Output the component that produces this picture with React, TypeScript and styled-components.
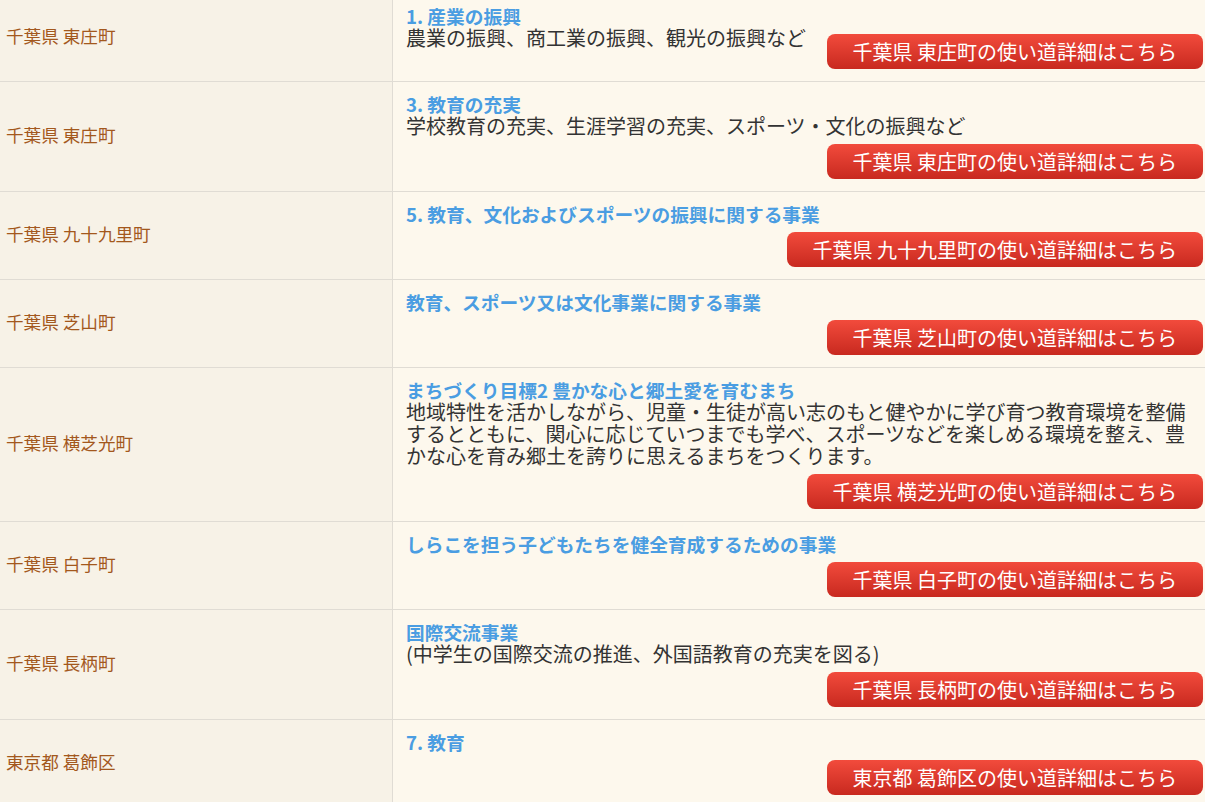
import React from "react";
import styled, { createGlobalStyle } from "styled-components";

const GlobalStyle = createGlobalStyle`
  html, body {
    margin: 0;
    padding: 0;
    background: #fdf8ed;
  }
  body {
    font-family: "Noto Sans CJK JP", "Noto Sans", sans-serif;
    overflow: hidden;
  }
`;

const Table = styled.div`
  margin-top: -6px;
  width: 1205px;
`;

const Row = styled.div`
  display: grid;
  grid-template-columns: 393px 1fr;
  border-bottom: 1px solid #e0dcd4;
`;

const PlaceCell = styled.div`
  display: flex;
  align-items: center;
  padding: 0 0 4px 6px;
  background: #f7f2e7;
  border-right: 1px solid #e0dcd4;
  color: #a3581d;
  font-size: 17.6px;
  line-height: 22px;
`;

const UseCell = styled.div`
  display: flow-root;
  padding: 11px 2px 12px 13px;
  background: #fdf8ed;
  font-size: 20px;
  line-height: 22px;
`;

const Title = styled.h3`
  margin: 0;
  font-size: 18.72px;
  line-height: 22px;
  font-weight: bold;
  color: #4a9de2;
`;

const Desc = styled.span`
  font-size: 20px;
  line-height: 22px;
  color: #333;
`;

const DetailButton = styled.a`
  float: right;
  margin-top: 7px;
  height: 35px;
  padding: 0 26px;
  border-radius: 8px;
  background: linear-gradient(#f24b3c, #c8291f);
  color: #fff;
  font-size: 20px;
  line-height: 35px;
  text-decoration: none;
  white-space: nowrap;
  cursor: pointer;
`;

type Item = { place: string; title: string; desc?: string };

const items: Item[] = [
  { place: "千葉県 東庄町", title: "1. 産業の振興", desc: "農業の振興、商工業の振興、観光の振興など" },
  { place: "千葉県 東庄町", title: "3. 教育の充実", desc: "学校教育の充実、生涯学習の充実、スポーツ・文化の振興など" },
  { place: "千葉県 九十九里町", title: "5. 教育、文化およびスポーツの振興に関する事業" },
  { place: "千葉県 芝山町", title: "教育、スポーツ又は文化事業に関する事業" },
  {
    place: "千葉県 横芝光町",
    title: "まちづくり目標2 豊かな心と郷土愛を育むまち",
    desc: "地域特性を活かしながら、児童・生徒が高い志のもと健やかに学び育つ教育環境を整備するとともに、関心に応じていつまでも学べ、スポーツなどを楽しめる環境を整え、豊かな心を育み郷土を誇りに思えるまちをつくります。",
  },
  { place: "千葉県 白子町", title: "しらこを担う子どもたちを健全育成するための事業" },
  { place: "千葉県 長柄町", title: "国際交流事業", desc: "(中学生の国際交流の推進、外国語教育の充実を図る)" },
  { place: "東京都 葛飾区", title: "7. 教育" },
];

export default function App() {
  return (
    <>
      <GlobalStyle />
      <Table>
        {items.map((it, i) => (
          <Row key={i}>
            <PlaceCell>{it.place}</PlaceCell>
            <UseCell>
              <Title>{it.title}</Title>
              {it.desc && <Desc>{it.desc}</Desc>}
              <DetailButton>{it.place}の使い道詳細はこちら</DetailButton>
            </UseCell>
          </Row>
        ))}
      </Table>
    </>
  );
}
